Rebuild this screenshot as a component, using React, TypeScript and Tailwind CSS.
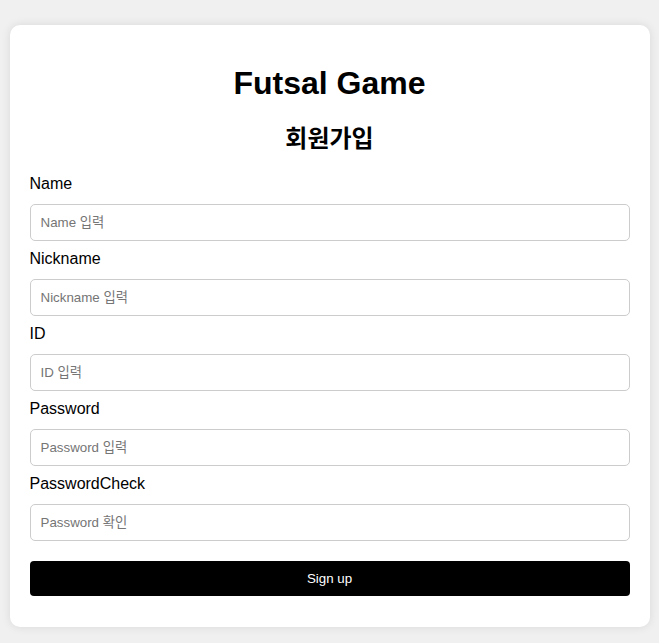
import React from "react";

const fields = [
  { label: "Name", placeholder: "Name 입력", type: "text" },
  { label: "Nickname", placeholder: "Nickname 입력", type: "text" },
  { label: "ID", placeholder: "ID 입력", type: "text" },
  { label: "Password", placeholder: "Password 입력", type: "password" },
  { label: "PasswordCheck", placeholder: "Password 확인", type: "password" },
];

const font = "font-['Liberation_Sans','Noto_Sans_CJK_KR',sans-serif]";

export default function App() {
  return (
    <div className={`min-h-screen bg-[#f0f0f0] pt-[25px] ${font}`}>
      <div className="mx-auto w-[640px] rounded-[10px] bg-white px-5 pt-5 pb-[31px] shadow-[0_0_10px_rgba(0,0,0,0.1)]">
        <h1 className="mt-[20px] text-center text-[32px] leading-[37px] font-bold text-black">
          Futsal Game
        </h1>
        <h2 className="mt-[22px] text-center text-[24px] leading-[29px] font-bold text-black">
          회원가입
        </h2>

        <form className="mt-[22px]" onSubmit={(e) => e.preventDefault()}>
          {fields.map((f) => (
            <div key={f.label}>
              <label className="block text-[16px] leading-[18px] text-black">
                {f.label}
              </label>
              <input
                type={f.type}
                placeholder={f.placeholder}
                className="mt-[11px] mb-[9px] block h-[37px] w-full rounded-[5px] border border-[#cccccc] px-[10px] text-[13.33px] text-black outline-none placeholder:text-[#757575]"
              />
            </div>
          ))}
          <button
            type="submit"
            className="mt-[20px] block h-[35px] w-full rounded-[4px] bg-black text-[13.33px] text-white"
          >
            Sign up
          </button>
        </form>
      </div>
    </div>
  );
}
